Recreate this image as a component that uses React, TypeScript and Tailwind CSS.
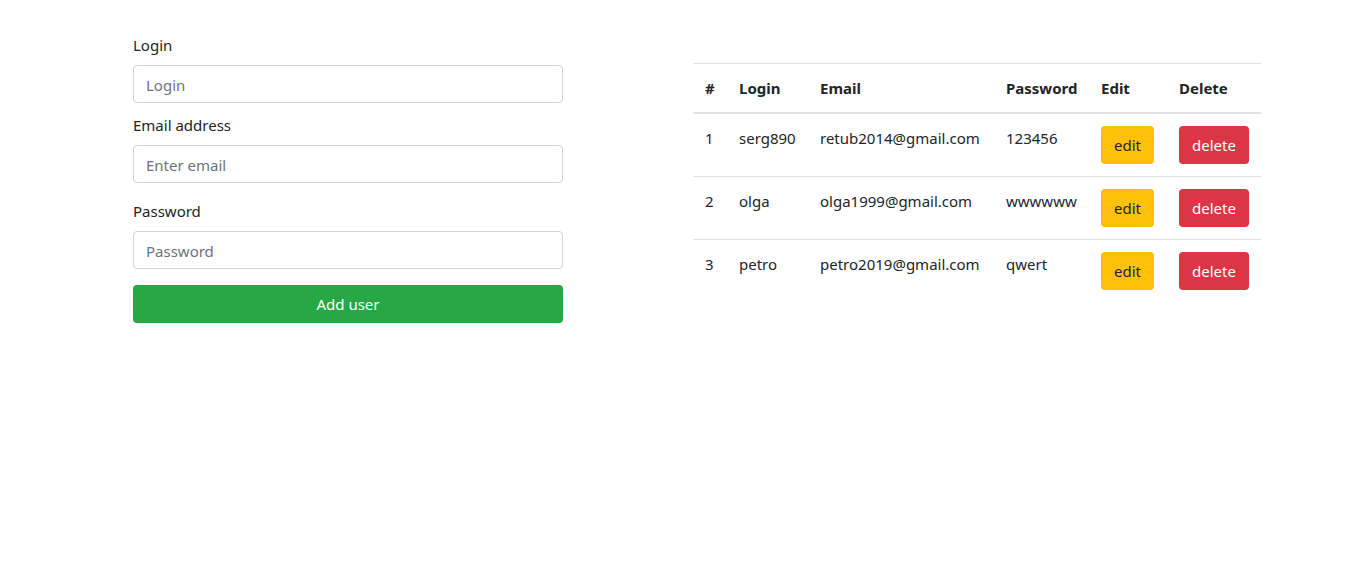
import React, { useState } from 'react';

type User = { id: number; login: string; email: string; password: string };

const initialUsers: User[] = [
  { id: 1, login: 'serg890', email: 'retub2014@gmail.com', password: '123456' },
  { id: 2, login: 'olga', email: 'olga1999@gmail.com', password: 'wwwwww' },
  { id: 3, login: 'petro', email: 'petro2019@gmail.com', password: 'qwert' },
];

function Field({ label, placeholder, type = 'text', className = '' }: { label: string; placeholder: string; type?: string; className?: string }) {
  return (
    <div className={className}>
      <label className="block mb-2 leading-6">{label}</label>
      <input
        type={type}
        placeholder={placeholder}
        className="block w-full h-[38px] px-3 pt-px rounded-[4px] border border-[#ced4da] text-[#495057] placeholder:text-[#6c757d] focus:outline-none"
      />
    </div>
  );
}

export default function App() {
  const [users] = useState<User[]>(initialUsers);

  return (
    <div className="min-h-screen bg-white text-[#212529] text-[15px] leading-6" style={{ fontFamily: '"Segoe UI", "Noto Sans", sans-serif' }}>
      <div className="flex pt-[33px] pl-[133px]">
        {/* Form */}
        <form className="w-[430px] shrink-0" onSubmit={(e) => e.preventDefault()}>
          <Field label="Login" placeholder="Login" className="mb-[10px]" />
          <Field label="Email address" placeholder="Enter email" type="email" className="mb-4" />
          <Field label="Password" placeholder="Password" type="password" className="mb-4" />
          <button type="submit" className="w-full h-[38px] rounded-[4px] bg-[#28a745] text-white">
            Add user
          </button>
        </form>

        {/* Users table */}
        <div className="ml-[130px] mt-[30px]">
          <table className="w-[568px] table-fixed border-collapse">
            <colgroup>
              <col className="w-[34px]" />
              <col className="w-[81px]" />
              <col className="w-[186px]" />
              <col className="w-[95px]" />
              <col className="w-[78px]" />
              <col className="w-[94px]" />
            </colgroup>
            <thead>
              <tr>
                {['#', 'Login', 'Email', 'Password', 'Edit', 'Delete'].map((h) => (
                  <th key={h} className="p-3 text-left font-bold leading-6 align-bottom border-t border-b-2 border-[#dee2e6]">
                    {h}
                  </th>
                ))}
              </tr>
            </thead>
            <tbody>
              {users.map((u) => (
                <tr key={u.id}>
                  <td className="p-3 align-top leading-6 border-t border-[#dee2e6]">{u.id}</td>
                  <td className="p-3 align-top leading-6 border-t border-[#dee2e6]">{u.login}</td>
                  <td className="p-3 align-top leading-6 border-t border-[#dee2e6] whitespace-nowrap">{u.email}</td>
                  <td className="p-3 align-top leading-6 border-t border-[#dee2e6]">{u.password}</td>
                  <td className="p-3 align-top leading-6 border-t border-[#dee2e6]">
                    <button className="h-[38px] w-[53px] rounded-[4px] bg-[#ffc107] text-[#212529]">edit</button>
                  </td>
                  <td className="p-3 align-top leading-6 border-t border-[#dee2e6]">
                    <button className="h-[38px] w-[70px] rounded-[4px] bg-[#dc3545] text-white">delete</button>
                  </td>
                </tr>
              ))}
            </tbody>
          </table>
        </div>
      </div>
    </div>
  );
}
